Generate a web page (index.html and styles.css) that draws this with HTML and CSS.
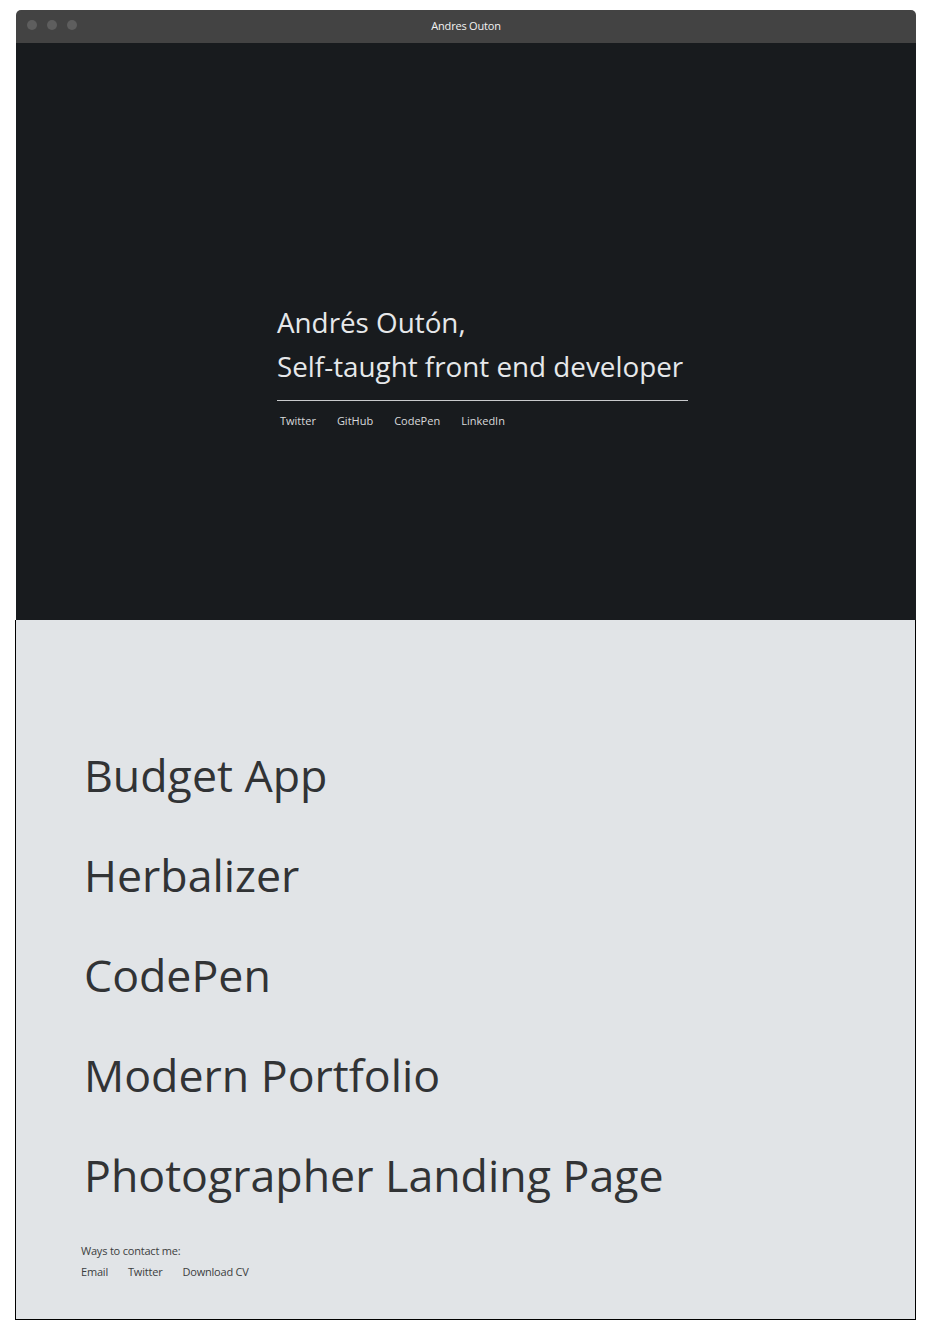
FILE: index.html
```html
<!DOCTYPE html>
<html lang="en">
<head>
<meta charset="utf-8">
<title>Andres Outon</title>
<link rel="stylesheet" href="styles.css">
</head>
<body>
<div class="window">
  <div class="titlebar">
    <div class="dots"><span class="dot"></span><span class="dot"></span><span class="dot"></span></div>
    <div class="title">Andres Outon</div>
  </div>
  <header class="hero">
    <div class="intro">
      <h1 class="intro-title">Andrés Outón,<br>Self-taught front end developer</h1>
      <nav class="social">
        <a href="#">Twitter</a>
        <a href="#">GitHub</a>
        <a href="#">CodePen</a>
        <a href="#">LinkedIn</a>
      </nav>
    </div>
  </header>
  <main class="projects">
    <ul class="project-list">
      <li>Budget App</li>
      <li>Herbalizer</li>
      <li>CodePen</li>
      <li>Modern Portfolio</li>
      <li>Photographer Landing Page</li>
    </ul>
    <footer class="contact">
      <p class="contact-label">Ways to contact me:</p>
      <div class="contact-links">
        <a href="#">Email</a>
        <a href="#">Twitter</a>
        <a href="#">Download CV</a>
      </div>
    </footer>
  </main>
</div>
</body>
</html>
```
FILE: styles.css
```css
* { box-sizing: border-box; }
body {
  margin: 0;
  background: #fff;
  font-family: "Open Sans", "Noto Sans", sans-serif;
}
a { color: inherit; text-decoration: none; }
.window {
  margin: 10px 0 0 16px;
  width: 900px;
}
.titlebar {
  height: 33px;
  background: #434343;
  border-radius: 5px 5px 0 0;
  display: flex;
  align-items: center;
  justify-content: center;
  position: relative;
  padding-bottom: 3px;
}
.dots {
  position: absolute;
  left: 11px;
  top: 10px;
  display: flex;
  gap: 10px;
}
.dot {
  width: 10px;
  height: 10px;
  border-radius: 50%;
  background: #5e5e5e;
}
.title {
  color: #f2f2f2;
  font-size: 11px;
  letter-spacing: -0.2px;
}
.hero {
  height: 577px;
  background: #181b1e;
  padding: 257px 0 0 261px;
}
.intro { width: 411px; }
.intro-title {
  margin: 0;
  font-weight: 400;
  font-size: 27.8px;
  line-height: 44px;
  color: #e6e8ea;
  padding-bottom: 12px;
  border-bottom: 1px solid #c8cacc;
}
.social {
  display: flex;
  gap: 21px;
  padding: 12px 0 0 3px;
  font-size: 11px;
  color: #d8dadc;
}
.projects {
  margin-left: -1px;
  width: 901px;
  height: 700px;
  background: #e1e4e7;
  border: 1px solid #000;
  border-top: none;
  padding: 120px 0 0 68px;
}
.project-list {
  list-style: none;
  margin: 0;
  padding: 0;
}
.project-list li {
  height: 100px;
  font-size: 44.7px;
  line-height: 70px;
  color: #313335;
}
.contact {
  margin-top: 3px;
  margin-left: -3px;
  font-size: 11px;
  color: #3c3e40;
  letter-spacing: -0.2px;
}
.contact-label { margin: 0 0 6px; }
.contact-links { display: flex; gap: 20px; }
```
